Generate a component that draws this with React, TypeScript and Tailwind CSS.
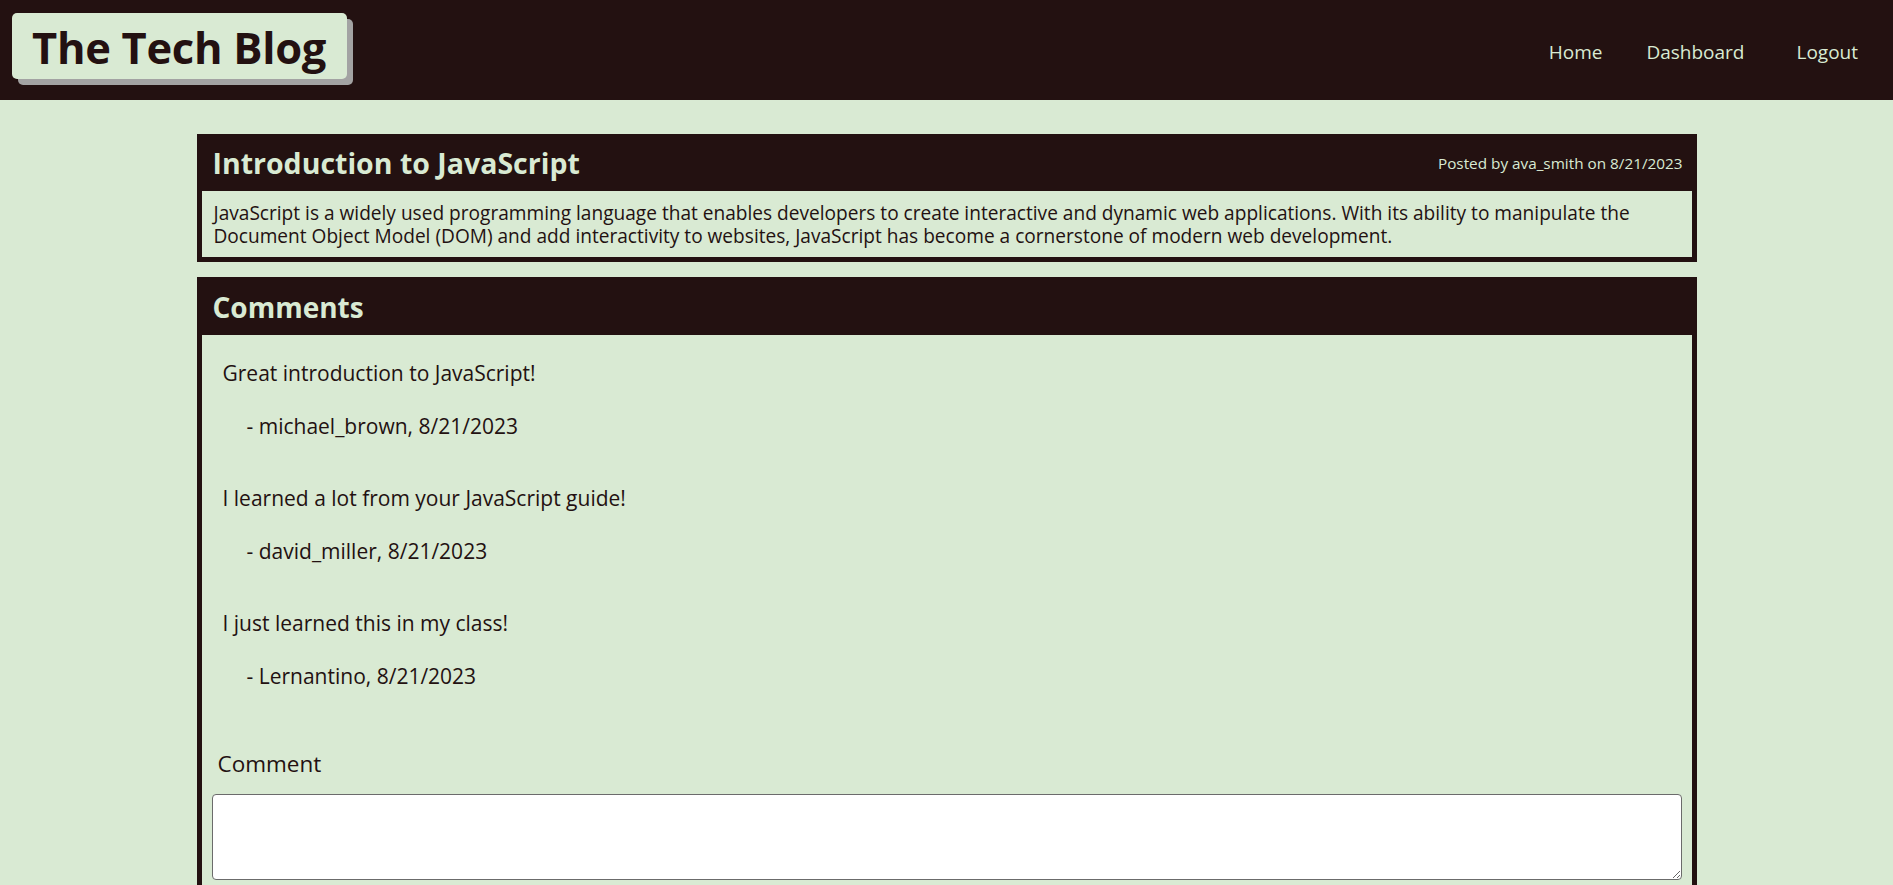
const comments = [
  { text: 'Great introduction to JavaScript!', author: 'michael_brown', date: '8/21/2023' },
  { text: 'I learned a lot from your JavaScript guide!', author: 'david_miller', date: '8/21/2023' },
  { text: 'I just learned this in my class!', author: 'Lernantino', date: '8/21/2023' },
];

export default function App() {
  return (
    <div className="min-h-screen bg-[#d9ead3] text-[#231111] font-['Open_Sans','Noto_Sans',sans-serif]">
      {/* header */}
      <header className="h-[100px] bg-[#231111] flex items-center justify-between pl-[12px] pr-[35px]">
        <h1 className="h-[66px] w-[335px] rounded-[5px] bg-[#d9ead3] shadow-[6px_6px_0_#a3a3a3] flex items-center pl-[20px] pt-[4px] text-[43.5px] font-bold leading-none tracking-[-0.3px] text-[#231111] mb-[8px]">
          The Tech Blog
        </h1>
        <nav className="flex items-center text-[19px] text-[#d9ead3] pt-[4px]">
          <a className="cursor-pointer">Home</a>
          <a className="cursor-pointer ml-[44px]">Dashboard</a>
          <a className="cursor-pointer ml-[52px]">Logout</a>
        </nav>
      </header>

      <main className="w-[1500px] mx-auto pt-[34px]">
        {/* post */}
        <section className="bg-[#231111] p-[5px]">
          <div className="flex items-center justify-between h-[52px] pl-[11px] pr-[9px] pb-[4px]">
            <h2 className="text-[28.5px] font-bold text-[#d9ead3] leading-none">Introduction to JavaScript</h2>
            <span className="text-[15.3px] text-[#d9ead3]">Posted by ava_smith on 8/21/2023</span>
          </div>
          <div className="bg-[#d9ead3] pl-[12px] pr-[10px] pt-[11px] pb-[9px] text-[19.1px] leading-[23px]">
            JavaScript is a widely used programming language that enables developers to create interactive and dynamic web applications. With its ability to manipulate the Document Object Model (DOM) and add interactivity to websites, JavaScript has become a cornerstone of modern web development.
          </div>
        </section>

        {/* comments */}
        <section className="bg-[#231111] p-[5px] mt-[15px]">
          <div className="flex items-center h-[53px] pl-[11px] pb-[4px]">
            <h2 className="text-[28px] font-bold text-[#d9ead3] leading-none">Comments</h2>
          </div>
          <div className="bg-[#d9ead3] pt-[23px] px-[10px] pb-[20px]">
            <ul className="pl-[11px] text-[21px]">
              {comments.map((c) => (
                <li key={c.author} className="mb-[42px]">
                  <p className="leading-[30px]">{c.text}</p>
                  <p className="leading-[30px] mt-[23px] pl-[24px]">
                    - {c.author}, {c.date}
                  </p>
                </li>
              ))}
            </ul>
            <form className="mt-[58px]">
              <label htmlFor="comment" className="block pl-[6px] text-[22.5px] leading-[30px] mb-[15px]">
                Comment
              </label>
              <textarea
                id="comment"
                className="block w-full h-[86px] bg-white border border-[#6b6b6b] rounded-[4px]"
              />
            </form>
          </div>
        </section>
      </main>
    </div>
  );
}
